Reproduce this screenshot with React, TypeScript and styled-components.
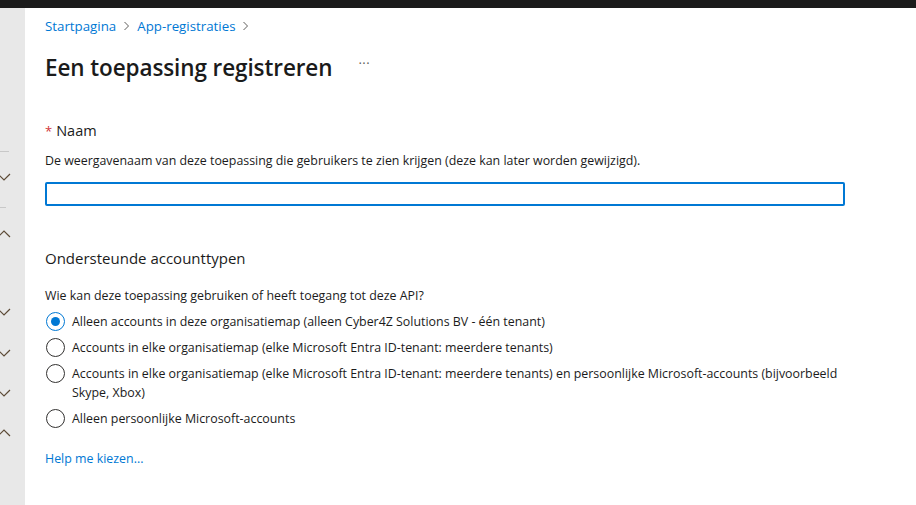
import React, { useState } from 'react';
import styled, { createGlobalStyle } from 'styled-components';

const GlobalStyle = createGlobalStyle`
  html, body {
    margin: 0;
    padding: 0;
    background: #ffffff;
    font-family: "Open Sans", "Noto Sans", "Liberation Sans", sans-serif;
    color: #323130;
  }
  * { box-sizing: border-box; }
`;

const Page = styled.div`
  width: 916px;
  height: 505px;
  display: flex;
  flex-direction: column;
  overflow: hidden;
`;

const TopBar = styled.div`
  height: 8px;
  flex-shrink: 0;
  background: #1b1b1b;
  border-top: 1px solid #1b1b1b;
`;

const Body = styled.div`
  flex: 1;
  display: flex;
  min-height: 0;
`;

const SideRail = styled.div`
  width: 25px;
  flex-shrink: 0;
  background: #e8e8e8;
  display: flex;
  flex-direction: column;
  padding-top: 143px;
`;

const RailDivider = styled.div`
  width: 9px;
  height: 1px;
  background: #c8c8c8;
`;

const RailChevron = styled.div<{ $gap: number }>`
  height: 12px;
  margin: ${p => p.$gap}px 0 0 -3px;
  display: flex;
  align-items: center;
`;

const Main = styled.main`
  flex: 1;
  padding: 9px 0 0 20px;
`;

const Breadcrumb = styled.nav`
  display: flex;
  align-items: center;
  gap: 7px;
  font-size: 13.3px;
  height: 18px;
`;

const Crumb = styled.a`
  color: #0078d4;
  text-decoration: none;
`;

const Sep = styled.span`
  display: inline-flex;
  align-items: center;
  color: #605e5c;
`;

const TitleRow = styled.div`
  display: flex;
  align-items: center;
  margin-top: 17px;
  height: 30px;
`;

const Title = styled.h1`
  margin: 0;
  font-size: 22.5px;
  font-weight: 600;
  color: #1b1b1b;
  letter-spacing: -0.1px;
`;

const More = styled.span`
  margin-left: 26px;
  font-size: 13px;
  line-height: 1;
  color: #605e5c;
  letter-spacing: 0.5px;
  transform: translateY(-4px);
`;

const Section = styled.section<{ $top: number }>`
  margin-top: ${p => p.$top}px;
  width: 800px;
`;

const FieldLabel = styled.div`
  font-size: 14.5px;
  color: #1b1b1b;
  display: flex;
  align-items: baseline;
  gap: 4px;
`;

const Required = styled.span`
  color: #d13438;
  font-size: 13px;
`;

const HelpText = styled.p<{ $top: number }>`
  margin: ${p => p.$top}px 0 0;
  font-size: 12.4px;
  color: #1b1b1b;
  line-height: 18px;
`;

const TextInput = styled.input`
  display: block;
  margin-top: 12px;
  width: 800px;
  height: 24px;
  border: 2px solid #0078d4;
  border-radius: 2px;
  outline: none;
  font: inherit;
  font-size: 13px;
  padding: 0 8px;
`;

const SectionTitle = styled.h2`
  margin: 0;
  font-size: 15px;
  font-weight: 400;
  color: #1b1b1b;
`;

const RadioList = styled.div`
  margin-top: 7px;
  display: flex;
  flex-direction: column;
  gap: 7px;
`;

const RadioRow = styled.label`
  display: flex;
  align-items: flex-start;
  gap: 7px;
  cursor: pointer;
  font-size: 12.4px;
  line-height: 19px;
  color: #1b1b1b;
`;

const RadioCircle = styled.span<{ $checked: boolean }>`
  width: 19px;
  height: 19px;
  flex-shrink: 0;
  margin-left: 1px;
  border-radius: 50%;
  border: 1px solid ${p => (p.$checked ? '#0078d4' : '#323130')};
  display: flex;
  align-items: center;
  justify-content: center;
  background: #fff;

  &::after {
    content: '';
    width: 9px;
    height: 9px;
    border-radius: 50%;
    background: ${p => (p.$checked ? '#0078d4' : 'transparent')};
  }
`;

const RadioText = styled.span`
  max-width: 775px;
`;

const HelpLink = styled.a`
  display: block;
  margin-top: 22px;
  font-size: 12.4px;
  color: #0078d4;
  text-decoration: none;
`;

const Chevron = ({ up }: { up?: boolean }) => (
  <svg width="14" height="8" viewBox="0 0 14 8">
    <path
      d={up ? 'M1 7 L7 1 L13 7' : 'M1 1 L7 7 L13 1'}
      fill="none"
      stroke="#5c4a36"
      strokeWidth="1.2"
    />
  </svg>
);

const CrumbArrow = () => (
  <svg width="7" height="10" viewBox="0 0 7 10">
    <path d="M1.5 1 L5.5 5 L1.5 9" fill="none" stroke="#605e5c" strokeWidth="1" />
  </svg>
);

const options = [
  'Alleen accounts in deze organisatiemap (alleen Cyber4Z Solutions BV - één tenant)',
  'Accounts in elke organisatiemap (elke Microsoft Entra ID-tenant: meerdere tenants)',
  'Accounts in elke organisatiemap (elke Microsoft Entra ID-tenant: meerdere tenants) en persoonlijke Microsoft-accounts (bijvoorbeeld Skype, Xbox)',
  'Alleen persoonlijke Microsoft-accounts',
];

const App: React.FC = () => {
  const [selected, setSelected] = useState(0);
  const [name, setName] = useState('');

  return (
    <Page>
      <GlobalStyle />
      <TopBar />
      <Body>
        <SideRail>
          <RailDivider />
          <RailChevron $gap={19}><Chevron /></RailChevron>
          <RailChevron $gap={18}><RailDivider /></RailChevron>
          <RailChevron $gap={15}><Chevron up /></RailChevron>
          <RailChevron $gap={66}><Chevron /></RailChevron>
          <RailChevron $gap={29}><Chevron /></RailChevron>
          <RailChevron $gap={28}><Chevron /></RailChevron>
          <RailChevron $gap={28}><Chevron up /></RailChevron>
        </SideRail>

        <Main>
          <Breadcrumb>
            <Crumb href="#">Startpagina</Crumb>
            <Sep><CrumbArrow /></Sep>
            <Crumb href="#">App-registraties</Crumb>
            <Sep><CrumbArrow /></Sep>
          </Breadcrumb>

          <TitleRow>
            <Title>Een toepassing registreren</Title>
            <More>···</More>
          </TitleRow>

          <Section $top={39}>
            <FieldLabel>
              <Required>*</Required>
              Naam
            </FieldLabel>
            <HelpText $top={12}>
              De weergavenaam van deze toepassing die gebruikers te zien krijgen (deze kan later worden gewijzigd).
            </HelpText>
            <TextInput value={name} onChange={e => setName(e.target.value)} />
          </Section>

          <Section $top={42}>
            <SectionTitle>Ondersteunde accounttypen</SectionTitle>
            <HelpText $top={19}>Wie kan deze toepassing gebruiken of heeft toegang tot deze API?</HelpText>
            <RadioList>
              {options.map((opt, i) => (
                <RadioRow key={i} onClick={() => setSelected(i)}>
                  <RadioCircle $checked={selected === i} />
                  <RadioText>{opt}</RadioText>
                </RadioRow>
              ))}
            </RadioList>
            <HelpLink href="#">Help me kiezen...</HelpLink>
          </Section>
        </Main>
      </Body>
    </Page>
  );
};

export default App;
